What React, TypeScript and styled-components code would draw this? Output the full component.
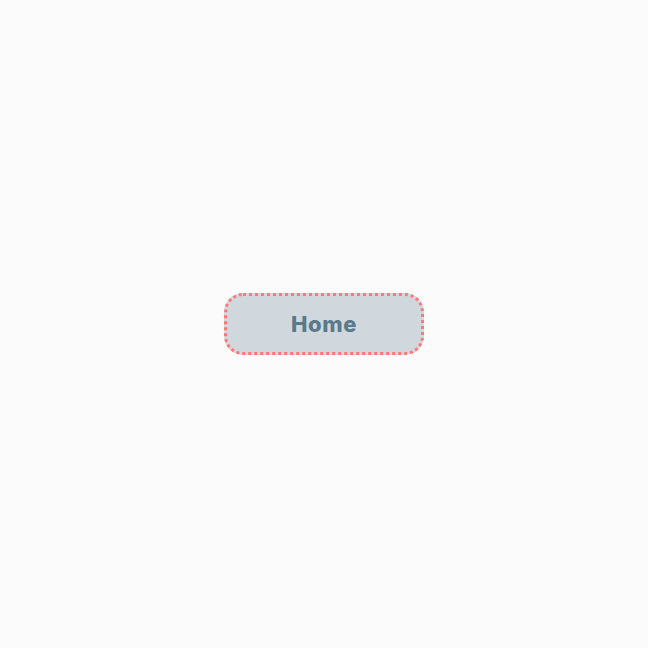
import styled, { createGlobalStyle } from "styled-components";

const GlobalStyle = createGlobalStyle`
  html, body {
    margin: 0;
    padding: 0;
    background: #fbfbfb;
  }
  #root {
    height: 100vh;
  }
`;

const Page = styled.div`
  display: flex;
  align-items: center;
  justify-content: center;
  width: 100%;
  height: 100%;
`;

const Button = styled.button`
  box-sizing: border-box;
  width: 200px;
  height: 62px;
  padding: 0;
  background-color: #d0d8de;
  border: 3px dotted #ff7676;
  border-radius: 19px;
  color: #5a7a8c;
  font-family: "Inter", "Lato", sans-serif;
  font-weight: 800;
  font-size: 22px;
  letter-spacing: 0.6px;
  cursor: pointer;
`;

const App = () => {
  return (
    <>
      <GlobalStyle />
      <Page>
        <Button>Home</Button>
      </Page>
    </>
  );
};
export default App;
